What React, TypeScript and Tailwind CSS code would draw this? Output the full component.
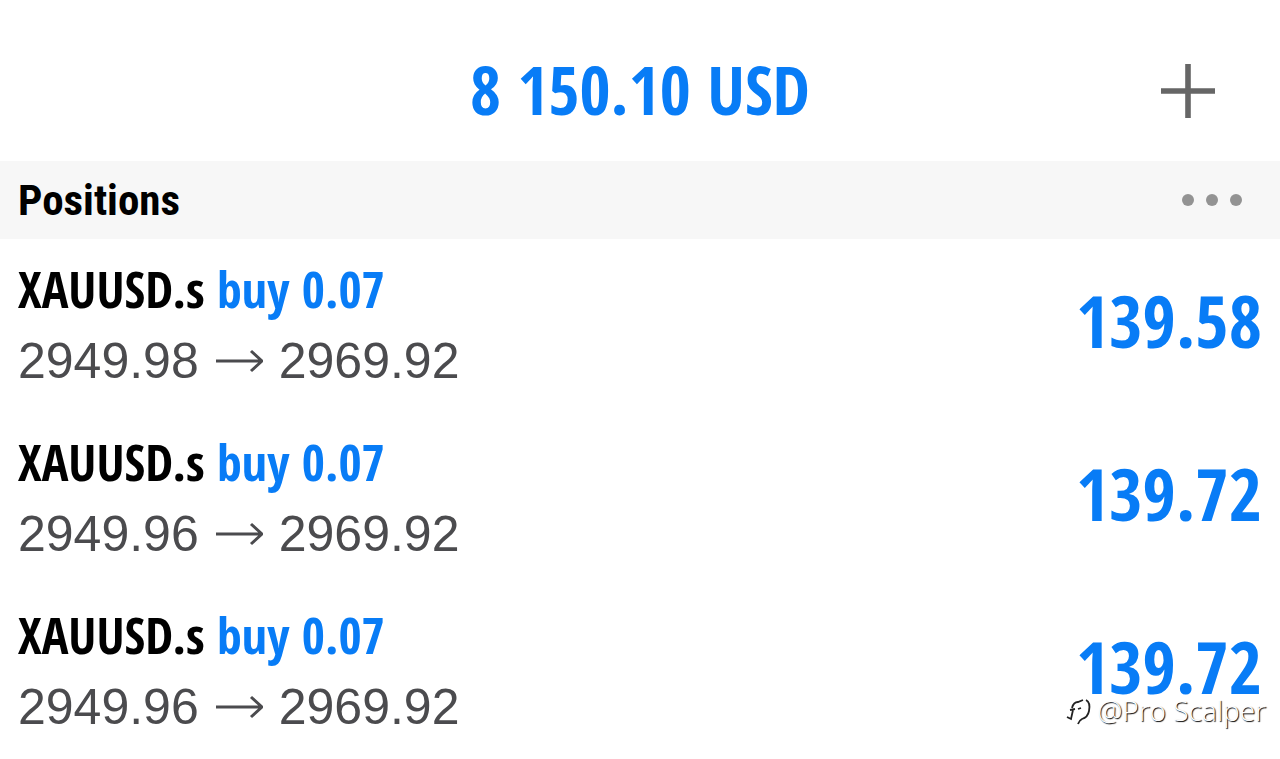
import React from "react";

type Position = {
  id: number;
  symbol: string;
  side: string;
  volume: string;
  open: string;
  current: string;
  profit: string;
};

const positions: Position[] = [
  { id: 1, symbol: "XAUUSD.s", side: "buy", volume: "0.07", open: "2949.98", current: "2969.92", profit: "139.58" },
  { id: 2, symbol: "XAUUSD.s", side: "buy", volume: "0.07", open: "2949.96", current: "2969.92", profit: "139.72" },
  { id: 3, symbol: "XAUUSD.s", side: "buy", volume: "0.07", open: "2949.96", current: "2969.92", profit: "139.72" },
];

const Arrow = () => (
  <svg className="h-6 w-12" viewBox="0 0 48 24" fill="none" stroke="currentColor" strokeWidth="3" aria-hidden="true">
    <path d="M1 12H47M36 2L47 12L36 22" />
  </svg>
);

const Header = () => (
  <header className="grid h-[161px] grid-cols-[1fr_auto_1fr] items-center pt-5">
    <h1 className="col-start-2 pb-1 text-[67px] leading-[72px] font-bold text-[#087cf6]">8 150.10 USD</h1>
    <button type="button" aria-label="New order" className="mr-[65px] cursor-pointer justify-self-end text-[#666666]">
      <svg className="h-[54px] w-[54px]" viewBox="0 0 54 54" fill="none" stroke="currentColor" strokeWidth="5.6">
        <path d="M27 0V54M0 27H54" />
      </svg>
    </button>
  </header>
);

const SectionBar = () => (
  <div className="flex h-[78px] items-center justify-between bg-[#f7f7f7] pr-[38px] pl-[18px]">
    <h2 className="font-['Roboto_Condensed',sans-serif] text-[43px] leading-[48px] font-bold text-black">Positions</h2>
    <button type="button" aria-label="More actions" className="cursor-pointer text-[#939393]">
      <svg className="h-3 w-[60px]" viewBox="0 0 60 12" fill="currentColor">
        <circle cx="6" cy="6" r="6" />
        <circle cx="30" cy="6" r="6" />
        <circle cx="54" cy="6" r="6" />
      </svg>
    </button>
  </div>
);

const PositionRow = ({ position }: { position: Position }) => (
  <li className="flex h-[173px] items-center justify-between px-[18px]">
    <div>
      <p className="text-[50px] leading-[70px] font-bold text-black">
        {position.symbol}{" "}
        <span className="text-[#087cf6]">
          {position.side} {position.volume}
        </span>
      </p>
      <p className="flex items-center gap-4 font-['Liberation_Sans',Arial,sans-serif] text-[50px] leading-[74px] text-[#4b4b4e]">
        <span>{position.open}</span>
        <Arrow />
        <span>{position.current}</span>
      </p>
    </div>
    <p className="pb-3 text-[72px] leading-[80px] font-bold text-[#087cf6]">{position.profit}</p>
  </li>
);

const Watermark = () => (
  <div className="absolute right-[14px] bottom-7 flex items-center gap-1 text-white">
    <svg className="h-8 w-7" viewBox="0 0 28 32" fill="none" stroke="#222" strokeWidth="1.8" aria-hidden="true">
      <path d="M6 14C7 10 9 8 12 8L17 6" />
      <path d="M20 6C24 8 24 12 23 17C22 22 20 24 16 25C14 26 13 27 12 30" />
      <path d="M4 16L9 15M12 15L15 14M7 16L5 25L1 23" />
    </svg>
    <span className="font-['Open_Sans',sans-serif] text-[28px] leading-10 font-light [text-shadow:1px_1px_1px_#000]">
      @Pro Scalper
    </span>
  </div>
);

export default function App() {
  return (
    <main className="relative w-full bg-white font-['Open_Sans_Condensed','Roboto_Condensed',sans-serif]">
      <Header />
      <SectionBar />
      <ul>
        {positions.map((position) => (
          <PositionRow key={position.id} position={position} />
        ))}
      </ul>
      <Watermark />
    </main>
  );
}
